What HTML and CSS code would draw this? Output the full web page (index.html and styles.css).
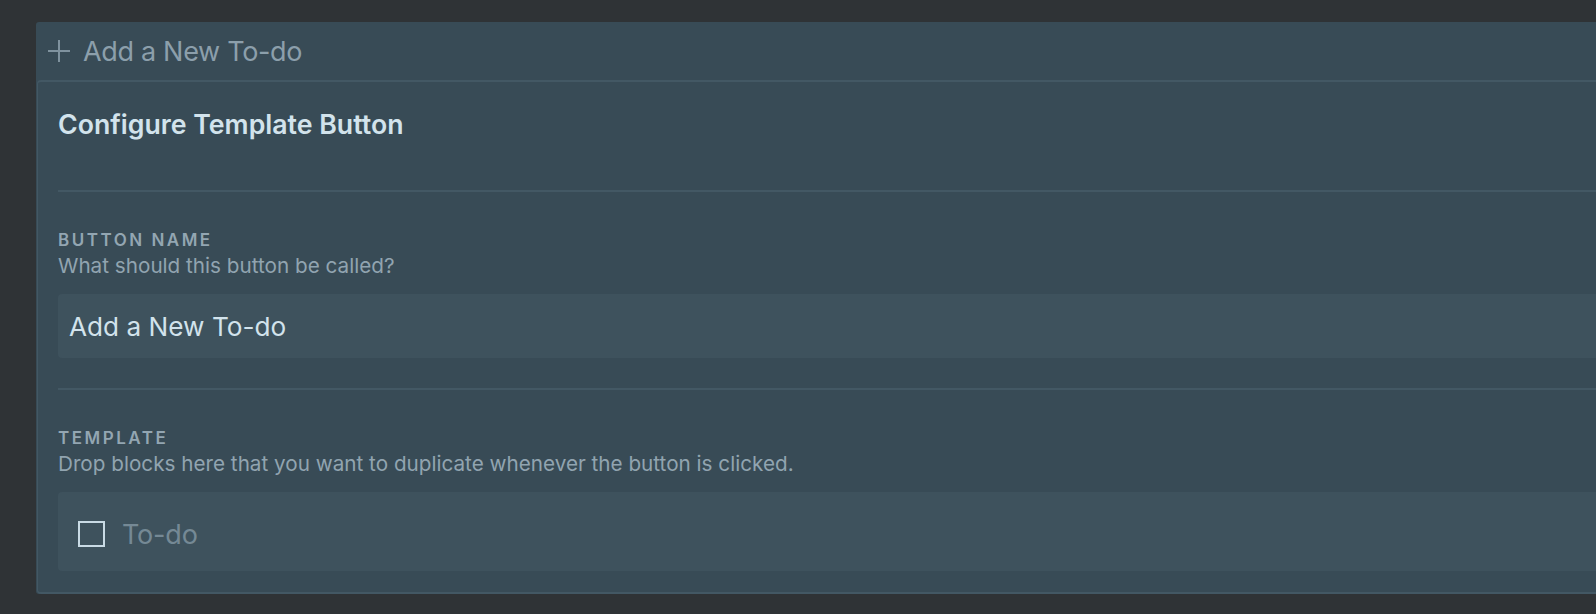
FILE: index.html
```html
<!DOCTYPE html>
<html lang="en">
<head>
<meta charset="utf-8">
<title>Configure Template Button</title>
<link rel="stylesheet" href="styles.css">
</head>
<body>
<div class="panel">
  <div class="header">
    <svg class="plus" width="24" height="24" viewBox="0 0 24 24" aria-hidden="true">
      <path d="M12 1v22M1 12h22" stroke="currentColor" stroke-width="2" fill="none"/>
    </svg>
    <span class="header-text">Add a New To-do</span>
  </div>
  <div class="card">
    <div class="title">Configure Template Button</div>
    <div class="divider"></div>
    <div class="section">
      <div class="label">BUTTON NAME</div>
      <div class="desc">What should this button be called?</div>
      <div class="input">Add a New To-do</div>
    </div>
    <div class="divider divider-2"></div>
    <div class="section">
      <div class="label">TEMPLATE</div>
      <div class="desc">Drop blocks here that you want to duplicate whenever the button is clicked.</div>
      <div class="template">
        <span class="checkbox"></span>
        <span class="placeholder">To-do</span>
      </div>
    </div>
  </div>
</div>
</body>
</html>
```

FILE: styles.css
```css
html, body {
  margin: 0;
  padding: 0;
  overflow: hidden;
}
body {
  background: #2f3336;
  font-family: Inter, "Noto Sans", "Liberation Sans", sans-serif;
  width: 1596px;
  height: 614px;
}
.panel {
  margin: 22px 0 0 36px;
  width: 1600px;
  background: #384b56;
  border-radius: 3px 0 0 3px;
}
.header {
  height: 58px;
  display: flex;
  align-items: center;
  padding-left: 11px;
  color: #8c9fab;
}
.plus {
  flex: none;
  color: #7f929e;
}
.header-text {
  margin-left: 12px;
  font-size: 27px;
  letter-spacing: -0.32px;
}
.card {
  margin-left: 1px;
  border-top: 2px solid #435864;
  border-left: 1px solid #435864;
  border-bottom: 2px solid #435864;
  border-radius: 4px 0 0 4px;
  padding: 0 0 21px 20px;
}
.title {
  padding-top: 26px;
  padding-bottom: 50px;
  font-size: 26.7px;
  line-height: 32px;
  font-weight: 600;
  color: #d2e3ec;
}
.divider {
  height: 2px;
  background: #435864;
}
.divider-2 {
  margin-top: 30px;
}
.section {
  padding-top: 37px;
}
.label {
  font-size: 17px;
  line-height: 22px;
  font-weight: 600;
  letter-spacing: 2.5px;
  color: #93a6b2;
}
.desc {
  margin-top: 1px;
  font-size: 20.7px;
  line-height: 28px;
  color: #91a4b0;
}
.input {
  margin-top: 14px;
  height: 64px;
  display: flex;
  align-items: center;
  padding-left: 11px;
  background: #3e525d;
  border-radius: 4px 0 0 4px;
  font-size: 26.2px;
  color: #d2e3ec;
}
.template {
  margin-top: 14px;
  height: 74px;
  padding: 5px 0 0 20px;
  display: flex;
  align-items: center;
  background: #3e525d;
  border-radius: 4px 0 0 4px;
}
.checkbox {
  flex: none;
  width: 22.5px;
  height: 22.5px;
  border: 2.5px solid #c9dbe5;
}
.placeholder {
  margin-left: 17.5px;
  font-size: 27px;
  color: #758995;
  letter-spacing: -0.2px;
}
```
